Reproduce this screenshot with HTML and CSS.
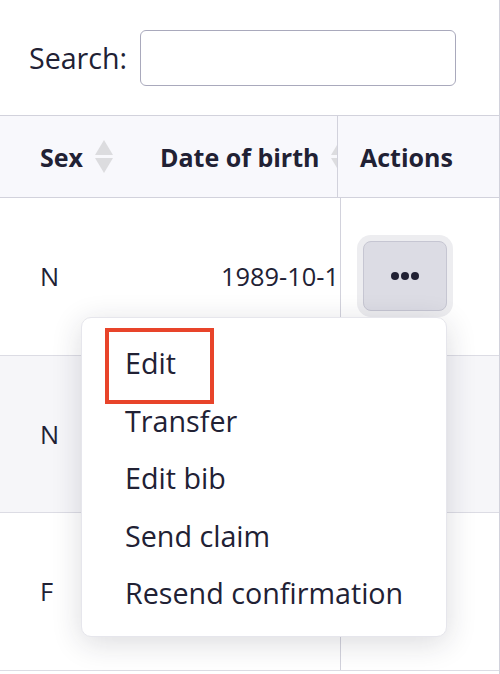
FILE: index.html
```html
<!DOCTYPE html>
<html lang="en">
<head>
<meta charset="utf-8">
<title>Entries</title>
<link rel="stylesheet" href="styles.css">
</head>
<body>
<div class="page">
  <div class="toolbar">
    <label class="search-label" for="q">Search:</label>
    <input class="search-input" id="q" type="text">
  </div>
  <div class="table">
    <div class="thead">
      <div class="th th-sex">Sex
        <span class="sort"><span class="up"></span><span class="down"></span></span>
      </div>
      <div class="th th-dob">Date of birth
        <span class="sort"><span class="up"></span><span class="down"></span></span>
      </div>
      <div class="th th-actions">Actions</div>
    </div>
    <div class="row">
      <div class="cell c-sex">N</div>
      <div class="cell c-dob">1989-10-1</div>
      <div class="cell c-actions"><button class="more" type="button"><span class="dot"></span><span class="dot"></span><span class="dot"></span></button></div>
    </div>
    <div class="row alt">
      <div class="cell c-sex">N</div>
      <div class="cell c-dob"></div>
      <div class="cell c-actions"></div>
    </div>
    <div class="row">
      <div class="cell c-sex">F</div>
      <div class="cell c-dob"></div>
      <div class="cell c-actions"></div>
    </div>
  </div>
  <ul class="menu">
    <li class="item highlight">Edit</li>
    <li class="item">Transfer</li>
    <li class="item">Edit bib</li>
    <li class="item">Send claim</li>
    <li class="item">Resend confirmation</li>
  </ul>
</div>
</body>
</html>
```
FILE: styles.css
```css
* { box-sizing: border-box; }
html, body { margin: 0; padding: 0; background: #ffffff; }
body {
  font-family: "Open Sans", "Noto Sans", sans-serif;
  color: #212134;
  font-size: 25.4px;
}
.page {
  position: relative;
  width: 500px;
  min-height: 674px;
  border-right: 1px solid #d2d2dc;
  overflow: hidden;
}
.toolbar {
  height: 115px;
  display: flex;
  align-items: center;
  padding-left: 29px;
  gap: 13px;
}
.search-label { font-size: 28.6px; }
.search-input {
  width: 316px;
  height: 56px;
  border: 1px solid #a9a9bc;
  border-radius: 6px;
  background: #fff;
  font: inherit;
}
.table { border-top: 1px solid #d2d2dc; }
.thead {
  display: grid;
  grid-template-columns: 140px 197px 1fr;
  height: 82px;
  background: #f8f8fc;
  border-bottom: 1px solid #d2d2dc;
  font-weight: 700;
  font-size: 25px;
}
.th {
  display: flex;
  align-items: center;
  white-space: nowrap;
  overflow: hidden;
}
.th-sex { padding-left: 40px; }
.th-dob { padding-left: 20px; }
.th-actions { border-left: 1px solid #d2d2dc; padding-left: 22px; }
.sort {
  display: inline-flex;
  flex-direction: column;
  gap: 3px;
  margin-left: 12px;
}
.sort .up, .sort .down {
  width: 0; height: 0;
  border-left: 9px solid transparent;
  border-right: 9px solid transparent;
}
.sort .up { border-bottom: 15px solid #dcdcdf; }
.sort .down { border-top: 15px solid #dcdcdf; }
.row {
  display: grid;
  grid-template-columns: 140px 200px 1fr;
  height: 157.5px;
  border-bottom: 1px solid #dcdce4;
  background: #ffffff;
}
.row.alt { background: #f6f6f9; }
.cell {
  display: flex;
  align-items: center;
  white-space: nowrap;
}
.c-sex { padding-left: 40px; }
.c-dob { padding-left: 81px; }
.c-actions { border-left: 1px solid #d2d2dc; padding-left: 22px; }
.more {
  width: 84px;
  height: 70px;
  border: 1px solid #c6c6d2;
  border-radius: 8px;
  background: #dcdce4;
  box-shadow: 0 0 0 6px #ededf0;
  display: flex;
  align-items: center;
  justify-content: center;
  gap: 2px;
  padding: 0;
}
.dot {
  width: 8px; height: 8px;
  border-radius: 50%;
  background: #212134;
}
.menu {
  position: absolute;
  left: 81px;
  top: 317px;
  width: 366px;
  margin: 0;
  padding: 16px 0 14px;
  list-style: none;
  background: #ffffff;
  border: 1px solid #e6e6ec;
  border-radius: 10px;
  box-shadow: 0 6px 30px rgba(33, 33, 52, 0.16);
  font-size: 28.7px;
}
.item {
  position: relative;
  height: 57.5px;
  display: flex;
  align-items: center;
  padding-left: 43px;
}
.highlight::after {
  content: "";
  position: absolute;
  left: 23px;
  top: -6px;
  width: 101px;
  height: 68px;
  border: 4px solid #e8442a;
}
```
